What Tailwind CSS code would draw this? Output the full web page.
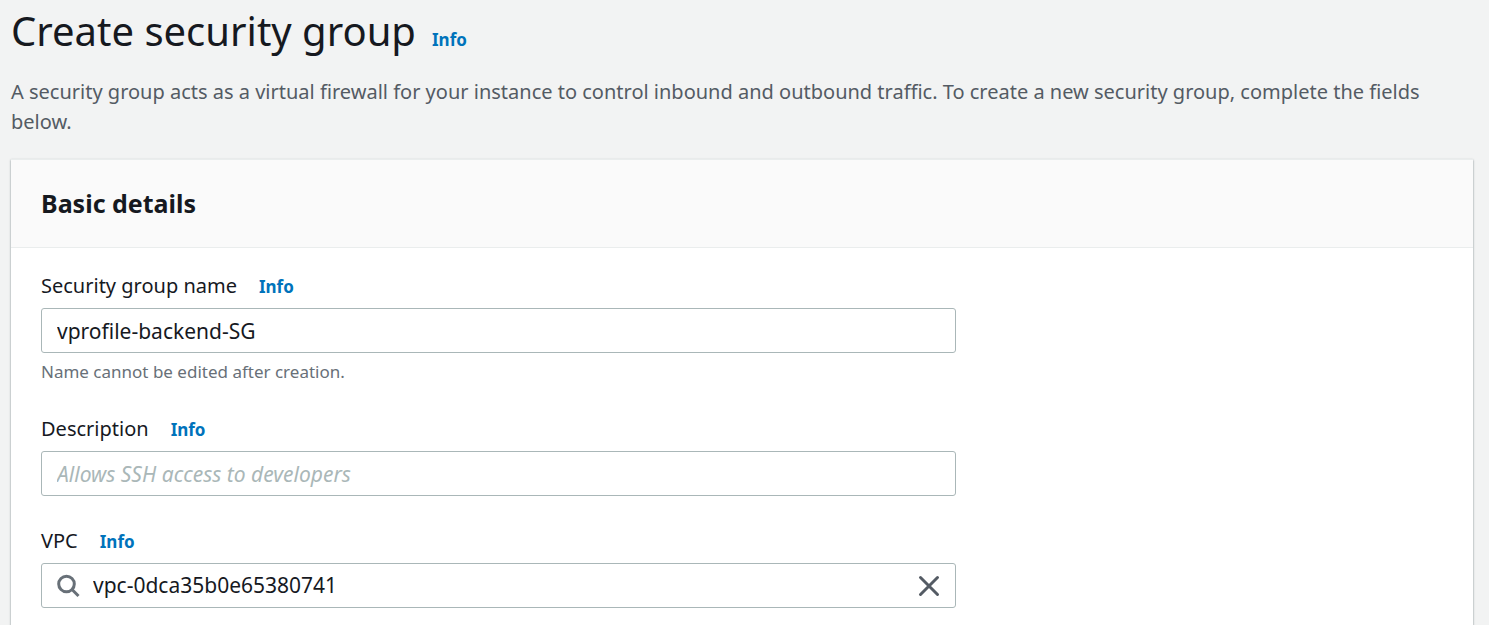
<!DOCTYPE html>
<html lang="en">
<head>
<meta charset="utf-8">
<title>Create security group</title>
<script src="https://cdn.jsdelivr.net/npm/@tailwindcss/browser@4"></script>
</head>
<body class="min-h-screen bg-[#f2f3f3] font-['Noto_Sans',sans-serif] text-[#16191f]">
<main class="flex min-h-screen flex-col pl-[11px] pr-4">
  <header>
    <div class="flex items-baseline gap-4 pt-1">
      <h1 class="text-[40px] leading-[54px]">Create security group</h1>
      <a href="#" class="text-[17px] font-bold text-[#0073bb]">Info</a>
    </div>
    <p class="pt-[19px] text-[20px] leading-[30px] text-[#545b64]">A security group acts as a virtual firewall for your instance to control inbound and outbound traffic. To create a new security group, complete the fields below.</p>
  </header>
  <section class="mt-[22px] flex grow flex-col border-t border-[#eaeded] bg-white shadow-[0_1px_2px_rgba(0,28,36,0.5)]">
    <div class="border-b border-[#eaeded] bg-[#fafafa] px-[30px] py-6">
      <h2 class="text-[25px] font-bold leading-[39px]">Basic details</h2>
    </div>
    <form class="flex w-[945px] max-w-full flex-col pl-[30px] pt-[23px]">
      <div class="flex items-baseline gap-[22px] text-[20px] leading-[30px]">
        <label for="name">Security group name</label>
        <a href="#" class="text-[17px] font-bold text-[#0073bb]">Info</a>
      </div>
      <input id="name" type="text" value="vprofile-backend-SG" class="mt-1.5 h-[45px] rounded-[3px] border border-[#aab7b8] bg-white px-[15px] text-[21px]">
      <p class="pt-1 text-[17px] leading-[30px] text-[#687078]">Name cannot be edited after creation.</p>
      <div class="mt-[27px] flex items-baseline gap-[22px] text-[20px] leading-[30px]">
        <label for="description">Description</label>
        <a href="#" class="text-[17px] font-bold text-[#0073bb]">Info</a>
      </div>
      <input id="description" type="text" placeholder="Allows SSH access to developers" class="mt-1.5 h-[45px] rounded-[3px] border border-[#aab7b8] bg-white px-[15px] text-[21px] placeholder:italic placeholder:text-[#aab7b8]">
      <div class="mt-[30px] flex items-baseline gap-[22px] text-[20px] leading-[30px]">
        <label for="vpc">VPC</label>
        <a href="#" class="text-[17px] font-bold text-[#0073bb]">Info</a>
      </div>
      <div class="mt-1.5 flex h-[45px] items-center rounded-[3px] border border-[#aab7b8] bg-white pl-[15px] pr-3.5">
        <svg class="size-6 shrink-0" viewBox="0 0 24 24" fill="none" stroke="#687078" stroke-width="3" aria-hidden="true"><circle cx="9.5" cy="10" r="7.8"/><path d="M15 15.5l6.5 6.5"/></svg>
        <input id="vpc" type="text" value="vpc-0dca35b0e65380741" class="ml-3 min-w-0 grow text-[21px] outline-none">
        <button type="button" aria-label="Clear"><svg class="size-6" viewBox="0 0 24 24" fill="none" stroke="#545b64" stroke-width="3" stroke-linecap="round" aria-hidden="true"><path d="M3.5 3.5l17 17M20.5 3.5l-17 17"/></svg></button>
      </div>
    </form>
  </section>
</main>
</body>
</html>
